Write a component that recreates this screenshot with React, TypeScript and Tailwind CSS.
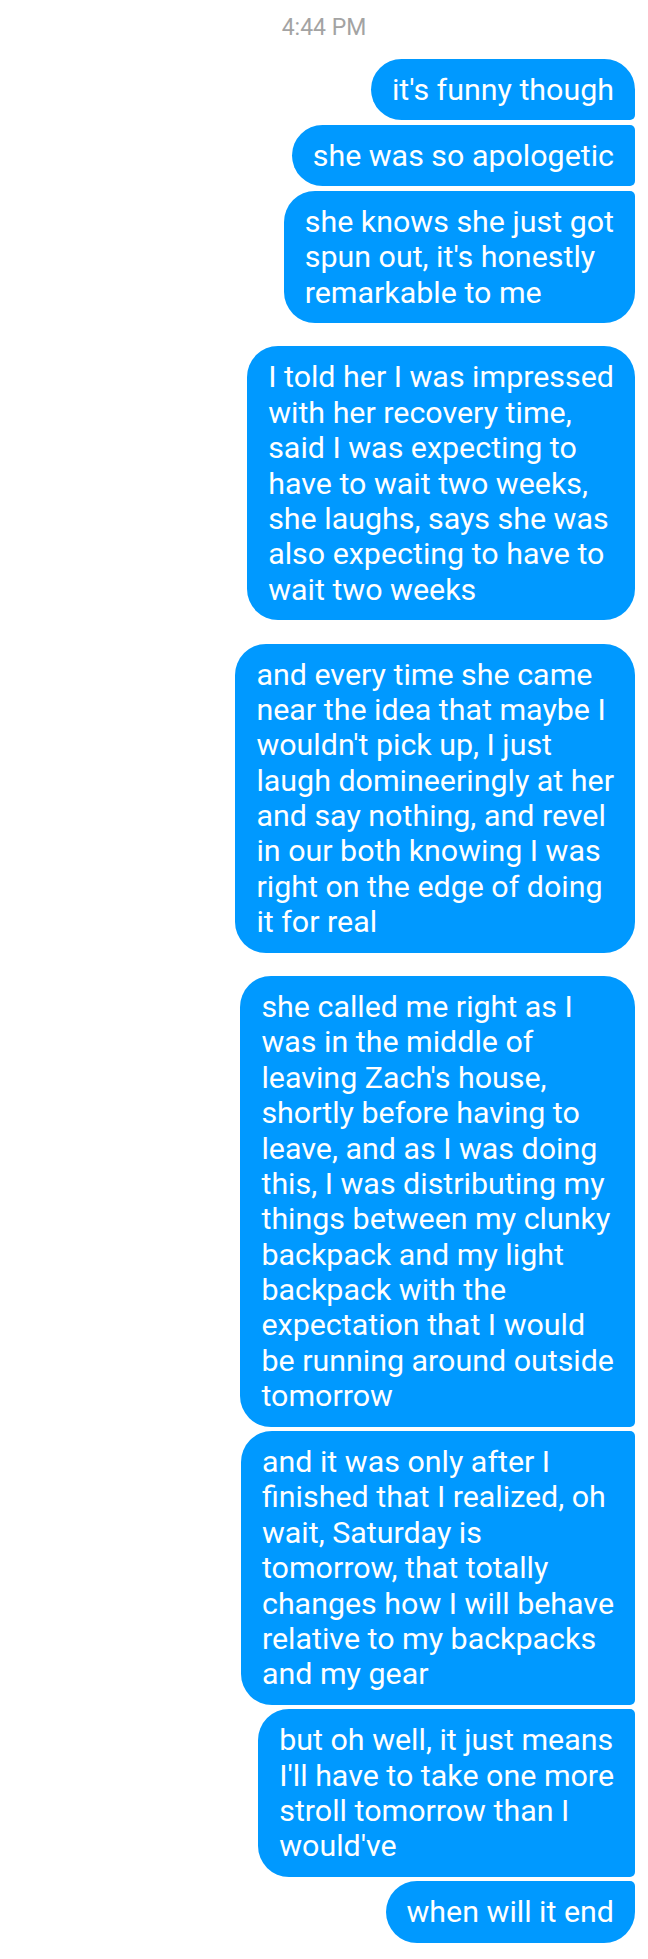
import React from "react";

type Msg = {
  lines: string[];
  pos: "first" | "middle" | "last" | "single";
  gap: "small" | "large" | "none";
};

const messages: Msg[] = [
  { lines: ["it's funny though"], pos: "first", gap: "none" },
  { lines: ["she was so apologetic"], pos: "middle", gap: "small" },
  {
    lines: ["she knows she just got", "spun out, it's honestly", "remarkable to me"],
    pos: "last",
    gap: "small",
  },
  {
    lines: [
      "I told her I was impressed",
      "with her recovery time,",
      "said I was expecting to",
      "have to wait two weeks,",
      "she laughs, says she was",
      "also expecting to have to",
      "wait two weeks",
    ],
    pos: "single",
    gap: "large",
  },
  {
    lines: [
      "and every time she came",
      "near the idea that maybe I",
      "wouldn't pick up, I just",
      "laugh domineeringly at her",
      "and say nothing, and revel",
      "in our both knowing I was",
      "right on the edge of doing",
      "it for real",
    ],
    pos: "single",
    gap: "large",
  },
  {
    lines: [
      "she called me right as I",
      "was in the middle of",
      "leaving Zach's house,",
      "shortly before having to",
      "leave, and as I was doing",
      "this, I was distributing my",
      "things between my clunky",
      "backpack and my light",
      "backpack with the",
      "expectation that I would",
      "be running around outside",
      "tomorrow",
    ],
    pos: "first",
    gap: "large",
  },
  {
    lines: [
      "and it was only after I",
      "finished that I realized, oh",
      "wait, Saturday is",
      "tomorrow, that totally",
      "changes how I will behave",
      "relative to my backpacks",
      "and my gear",
    ],
    pos: "middle",
    gap: "small",
  },
  {
    lines: [
      "but oh well, it just means",
      "I'll have to take one more",
      "stroll tomorrow than I",
      "would've",
    ],
    pos: "middle",
    gap: "small",
  },
  { lines: ["when will it end"], pos: "last", gap: "small" },
];

const cornerClass = {
  first: "rounded-l-[31px] rounded-tr-[31px] rounded-br-[5px]",
  middle: "rounded-l-[31px] rounded-r-[5px]",
  last: "rounded-l-[31px] rounded-tr-[5px] rounded-br-[31px]",
  single: "rounded-[31px]",
};

const gapClass = {
  none: "mt-0",
  small: "mt-[4.5px]",
  large: "mt-[23.5px]",
};

const Bubble = ({ msg }: { msg: Msg }) => {
  return (
    <div
      className={`w-fit bg-[#0099ff] text-white px-[21px] py-[13px] text-[30.4px] leading-[35.37px] ${cornerClass[msg.pos]} ${gapClass[msg.gap]}`}
    >
      {msg.lines.map((line, i) => (
        <div key={i} className="whitespace-nowrap">
          {line}
        </div>
      ))}
    </div>
  );
};

const App = () => {
  return (
    <div className="w-[648px] h-[1959px] bg-white font-['Roboto',sans-serif] overflow-hidden">
      <div className="pt-[14px] text-center text-[23px] leading-[28px] text-[#a3a3a3]">
        4:44 PM
      </div>
      <div className="flex flex-col items-end pr-[13px] mt-[17px]">
        {messages.map((m, i) => (
          <Bubble key={i} msg={m} />
        ))}
      </div>
    </div>
  );
};

export default App;
